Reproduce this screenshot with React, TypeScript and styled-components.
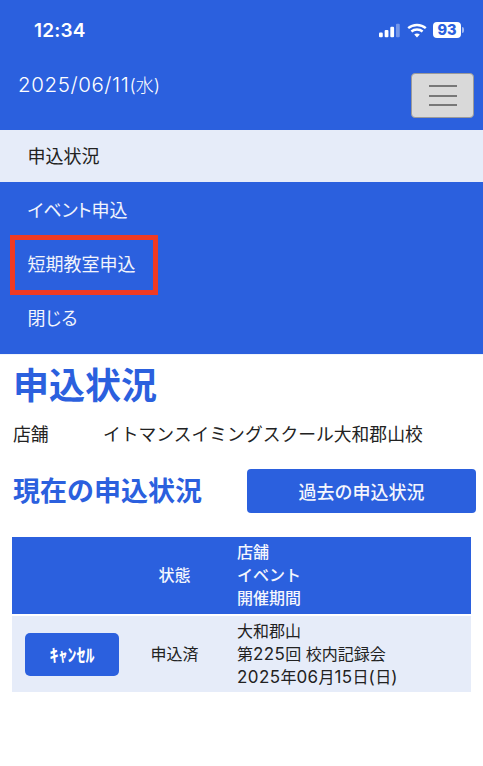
import React from "react";
import styled, { createGlobalStyle } from "styled-components";

const BLUE = "#2b60de";
const PALE = "#e6ecf9";

const GlobalStyle = createGlobalStyle`
  html, body {
    margin: 0;
    padding: 0;
    background: #fff;
    font-family: Inter, "Noto Sans CJK JP", sans-serif;
    color: #222;
  }
  *, *::before, *::after { box-sizing: border-box; }
`;

const Page = styled.div`
  width: 483px;
  height: 766px;
  overflow: hidden;
`;

const Header = styled.header`
  height: 130px;
  background: ${BLUE};
  color: #fff;
`;

const StatusBar = styled.div`
  display: flex;
  align-items: center;
  justify-content: space-between;
  height: 60px;
  padding: 0 22px 0 34px;
`;

const Clock = styled.div`
  font-size: 19px;
  font-weight: 600;
  letter-spacing: 0.2px;
`;

const StatusIcons = styled.div`
  display: flex;
  align-items: center;
  gap: 6px;
`;

const Battery = styled.div`
  position: relative;
  width: 28px;
  height: 16px;
  border-radius: 4px;
  background: #fff;
  color: ${BLUE};
  font-size: 14.5px;
  font-weight: 800;
  line-height: 16px;
  text-align: center;

  &::after {
    content: "";
    position: absolute;
    top: 5px;
    right: -3px;
    width: 2px;
    height: 6px;
    border-radius: 0 2px 2px 0;
    background: rgba(255, 255, 255, 0.55);
  }
`;

const DateRow = styled.div`
  display: flex;
  justify-content: space-between;
  align-items: flex-start;
  padding: 13px 9px 0 18px;
`;

const DateText = styled.div`
  font-size: 18px;
  line-height: 24px;
  font-weight: 300;
`;

const DateDigits = styled.span`
  font-size: 20.5px;
  letter-spacing: 0.6px;
`;

const MenuButton = styled.button`
  display: flex;
  flex-direction: column;
  justify-content: center;
  gap: 7.5px;
  align-items: center;
  width: 63px;
  height: 45px;
  padding: 0;
  background: #d9d9d9;
  border: 1px solid #9a9a9a;
  border-radius: 4px;
`;

const MenuLine = styled.span`
  display: block;
  width: 28px;
  height: 2px;
  background: #777;
`;

const Nav = styled.nav`
  background: ${BLUE};
  padding-bottom: 9px;
  border-bottom: 1px solid #f0f4fb;
  font-feature-settings: "palt";
`;

const NavItem = styled.div<{ $active?: boolean; $marked?: boolean }>`
  position: relative;
  display: flex;
  align-items: center;
  height: ${({ $active }) => ($active ? "52px" : "54px")};
  margin-bottom: ${({ $active }) => ($active ? "1px" : "0")};
  padding: 0 0 2px 27.5px;
  font-size: 18px;
  background: ${({ $active }) => ($active ? PALE : "transparent")};
  color: ${({ $active }) => ($active ? "#222" : "#f1f4fc")};

  ${({ $marked }) =>
    $marked &&
    `&::after {
      content: "";
      position: absolute;
      left: 10px;
      top: -2px;
      width: 148px;
      height: 60px;
      border: 5px solid #ef3a24;
    }`}
`;

const Main = styled.main`
  padding: 0 12px;
`;

const Title = styled.h1`
  margin: 0;
  padding: 2px 0 0 1px;
  font-size: 36px;
  line-height: 58px;
  font-weight: 700;
  color: ${BLUE};
`;

const StoreRow = styled.div`
  display: flex;
  margin-top: 6px;
  padding-left: 1px;
  font-size: 17.8px;
  line-height: 28px;
`;

const StoreLabel = styled.div`
  width: 90px;
`;

const SectionRow = styled.div`
  display: flex;
  align-items: center;
  justify-content: space-between;
  margin-top: 20px;
  padding-left: 1px;
`;

const SectionTitle = styled.h2`
  margin: 0 0 3px;
  font-size: 27px;
  font-weight: 700;
  color: ${BLUE};
`;

const PastButton = styled.button`
  width: 229px;
  height: 44px;
  margin-right: -5px;
  border: 0;
  border-radius: 4px;
  background: ${BLUE};
  color: #f4f6fd;
  font-family: inherit;
  font-size: 18px;
  font-weight: 500;
`;

const Table = styled.table`
  width: 459px;
  margin: 24px 0 0;
  border-collapse: collapse;
  table-layout: fixed;
  font-size: 16px;
  line-height: 23px;
`;

const HeadCell = styled.th<{ $width: number; $align?: string }>`
  width: ${({ $width }) => $width}px;
  height: 78px;
  padding: 0 0 0 ${({ $align }) => ($align === "left" ? "20px" : "0")};
  background: ${BLUE};
  color: #f4f6fd;
  font-weight: 500;
  text-align: ${({ $align }) => $align || "center"};
  border-bottom: 2px solid #fff;
`;

const Cell = styled.td<{ $align?: string }>`
  height: 77px;
  padding: 0 0 0 ${({ $align }) => ($align === "left" ? "20px" : "0")};
  background: ${PALE};
  text-align: ${({ $align }) => $align || "center"};
`;

const Digits = styled.span`
  font-size: 17px;
  letter-spacing: 0.4px;
`;

const CancelButton = styled.button`
  display: block;
  width: 94px;
  height: 43px;
  margin-left: 13px;
  border: 0;
  border-radius: 5px;
  background: ${BLUE};
  color: #fff;
  font-family: inherit;
  font-size: 18px;
  font-weight: 700;
`;

function SignalIcon() {
  return (
    <svg width="22" height="15" viewBox="0 0 21 14" fill="#fff">
      <rect x="0" y="9" width="3.6" height="4.5" rx="1" />
      <rect x="5.4" y="6.5" width="3.6" height="7" rx="1" />
      <rect x="10.8" y="3.5" width="3.6" height="10" rx="1" />
      <rect x="16.2" y="0.5" width="3.6" height="13" rx="1" fill="#fff" fillOpacity="0.35" />
    </svg>
  );
}

function WifiIcon() {
  return (
    <svg width="20" height="15" viewBox="0 0 20 15" fill="none" stroke="#fff" strokeWidth="2.4">
      <path d="M1.2 5.2C6 .9 14 .9 18.8 5.2" />
      <path d="M4.4 8.5C7.4 5.9 12.6 5.9 15.6 8.5" />
      <path d="M10 14.6L7.2 11.5C8.8 10.3 11.2 10.3 12.8 11.5Z" fill="#fff" stroke="none" />
    </svg>
  );
}

export default function App() {
  return (
    <Page>
      <GlobalStyle />
      <Header>
        <StatusBar>
          <Clock>12:34</Clock>
          <StatusIcons>
            <SignalIcon />
            <WifiIcon />
            <Battery>93</Battery>
          </StatusIcons>
        </StatusBar>
        <DateRow>
          <DateText>
            <DateDigits>2025/06/11</DateDigits>(水)
          </DateText>
          <MenuButton aria-label="menu">
            <MenuLine />
            <MenuLine />
            <MenuLine />
          </MenuButton>
        </DateRow>
      </Header>
      <Nav>
        <NavItem $active>申込状況</NavItem>
        <NavItem>イベント申込</NavItem>
        <NavItem $marked>短期教室申込</NavItem>
        <NavItem>閉じる</NavItem>
      </Nav>
      <Main>
        <Title>申込状況</Title>
        <StoreRow>
          <StoreLabel>店舗</StoreLabel>
          <div>イトマンスイミングスクール大和郡山校</div>
        </StoreRow>
        <SectionRow>
          <SectionTitle>現在の申込状況</SectionTitle>
          <PastButton>過去の申込状況</PastButton>
        </SectionRow>
        <Table>
          <thead>
            <tr>
              <HeadCell $width={120} />
              <HeadCell $width={85}>状態</HeadCell>
              <HeadCell $width={254} $align="left">
                店舗
                <br />
                イベント
                <br />
                開催期間
              </HeadCell>
            </tr>
          </thead>
          <tbody>
            <tr>
              <Cell>
                <CancelButton>ｷｬﾝｾﾙ</CancelButton>
              </Cell>
              <Cell>申込済</Cell>
              <Cell $align="left">
                大和郡山
                <br />
                第<Digits>225</Digits>回 校内記録会
                <br />
                <Digits>2025</Digits>年<Digits>06</Digits>月<Digits>15</Digits>日<Digits>(</Digits>日<Digits>)</Digits>
              </Cell>
            </tr>
          </tbody>
        </Table>
      </Main>
    </Page>
  );
}
